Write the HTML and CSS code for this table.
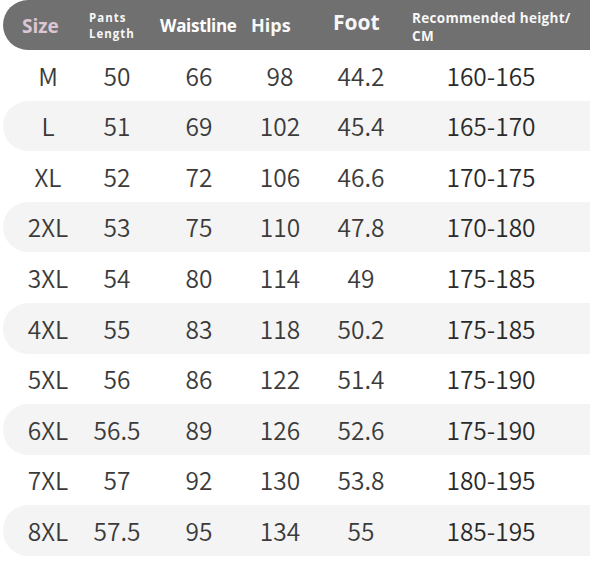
FILE: index.html
```html
<!DOCTYPE html>
<html>
<head>
<meta charset="utf-8">
<link rel="stylesheet" href="styles.css">
</head>
<body>
<div class="chart">
  <div class="head">
    <div class="h h-size">Size</div>
    <div class="h h-pants">Pants<br>Length</div>
    <div class="h h-waist">Waistline</div>
    <div class="h h-hips">Hips</div>
    <div class="h h-foot">Foot</div>
    <div class="h h-rec">Recommended height/<br>CM</div>
  </div>
  <div class="row"><span>M</span><span>50</span><span>66</span><span>98</span><span>44.2</span><span class="rec">160-165</span></div>
  <div class="row alt"><span>L</span><span>51</span><span>69</span><span>102</span><span>45.4</span><span class="rec">165-170</span></div>
  <div class="row"><span>XL</span><span>52</span><span>72</span><span>106</span><span>46.6</span><span class="rec">170-175</span></div>
  <div class="row alt"><span>2XL</span><span>53</span><span>75</span><span>110</span><span>47.8</span><span class="rec">170-180</span></div>
  <div class="row"><span>3XL</span><span>54</span><span>80</span><span>114</span><span>49</span><span class="rec">175-185</span></div>
  <div class="row alt"><span>4XL</span><span>55</span><span>83</span><span>118</span><span>50.2</span><span class="rec">175-185</span></div>
  <div class="row"><span>5XL</span><span>56</span><span>86</span><span>122</span><span>51.4</span><span class="rec">175-190</span></div>
  <div class="row alt"><span>6XL</span><span>56.5</span><span>89</span><span>126</span><span>52.6</span><span class="rec">175-190</span></div>
  <div class="row"><span>7XL</span><span>57</span><span>92</span><span>130</span><span>53.8</span><span class="rec">180-195</span></div>
  <div class="row alt"><span>8XL</span><span>57.5</span><span>95</span><span>134</span><span>55</span><span class="rec">185-195</span></div>
</div>
</body>
</html>
```
FILE: styles.css
```css
html, body {
  margin: 0;
  padding: 0;
  background: #ffffff;
}
.chart {
  width: 590px;
  padding-left: 3px;
  box-sizing: border-box;
  display: flex;
  flex-direction: column;
}
.head {
  height: 50px;
  background: #707070;
  border-radius: 25px 0 0 25px;
  display: flex;
  align-items: center;
  padding-left: 19px;
  font-family: "Open Sans", "Liberation Sans", sans-serif;
  font-weight: 700;
  color: #f7f7f7;
}
.h { line-height: 1; }
.h-size { width: 67px; font-size: 19px; color: #dcc6d3; padding-top: 2px; }
.h-pants { width: 71px; font-size: 11.5px; letter-spacing: 1px; line-height: 16px; padding-top: 2px; }
.h-waist { width: 91px; font-size: 17px; letter-spacing: -0.3px; color: #ffffff; padding-top: 1px; }
.h-hips { width: 82px; font-size: 18px; margin-bottom: 1px; }
.h-foot { width: 79px; font-size: 21px; margin-bottom: 5px; }
.h-rec { font-size: 13.5px; letter-spacing: 0.3px; line-height: 18px; padding-top: 3px; }
.row {
  height: 50.6px;
  display: grid;
  grid-template-columns: 69px 69px 95px 67px 95px 165px;
  align-items: center;
  padding-left: 10.5px;
  font-family: "Noto Sans CJK SC", "Noto Sans", sans-serif;
  font-size: 24.5px;
  font-weight: 350;
  color: #3b3b3b;
  border-radius: 25px 0 0 25px;
}
.row span { text-align: center; line-height: 1; padding-top: 1px; }
.row.alt { background: #f4f4f4; }
.row .rec { color: #2a2a2a; }
```
